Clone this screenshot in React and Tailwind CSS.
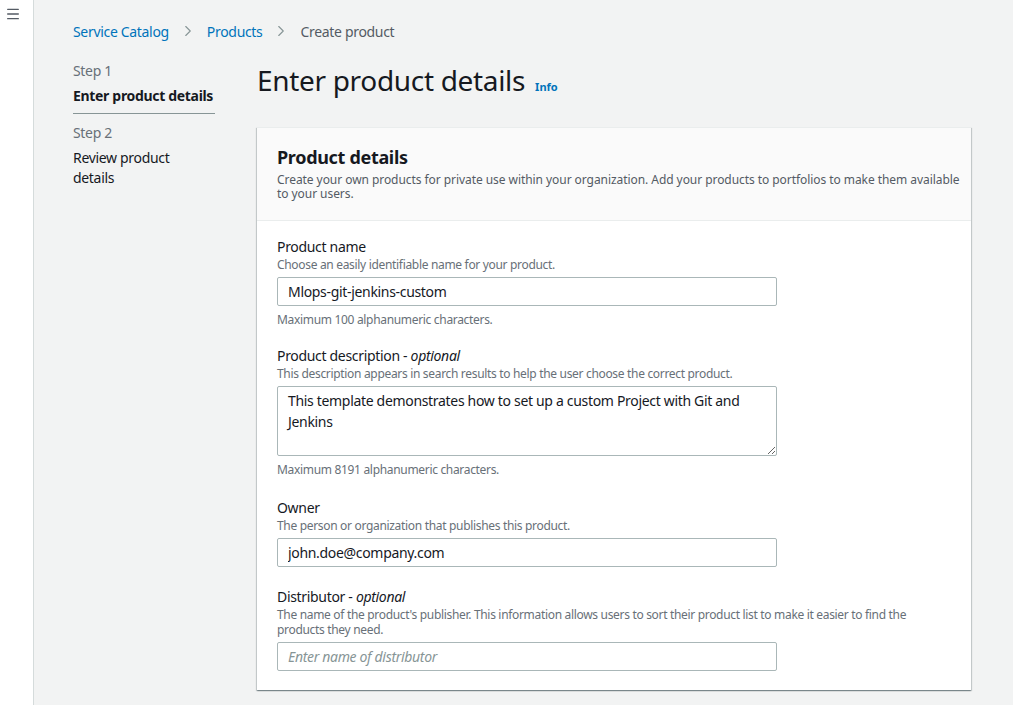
import { Menu, ChevronRight } from "lucide-react";

const font = { fontFamily: '"Noto Sans", "Open Sans", sans-serif' };

function Field({ label, optional, hint, children, footer, className }) {
  return (
    <div className={className}>
      <div className="text-[14px] leading-[20px] text-[#16191f]">
        {label}
        {optional && (
          <>
            {" - "}
            <i>optional</i>
          </>
        )}
      </div>
      <div className="text-[12px] leading-[15px] text-[#687078]">{hint}</div>
      <div className="mt-[5px]">{children}</div>
      {footer && (
        <div className="mt-[6px] text-[12px] leading-[16px] text-[#687078]">{footer}</div>
      )}
    </div>
  );
}

const inputCls =
  "block w-[500px] h-[29px] border border-[#aab7b8] rounded-[2px] bg-white px-[10px] text-[14px] text-[#16191f] outline-none placeholder:italic placeholder:text-[#879596]";

export default function App() {
  return (
    <div className="flex min-h-[705px] bg-[#f2f3f3] tracking-[-0.02em]" style={font}>
      {/* collapsed nav rail */}
      <div className="w-[34px] shrink-0 bg-white border-r border-[#d5dbdb] pt-[6px] pl-[5px]">
        <Menu size={16} strokeWidth={2} className="text-[#545b64]" />
      </div>

      <div className="flex-1 pl-[39px] pr-[42px]">
        {/* breadcrumb */}
        <nav className="flex items-center h-[20px] mt-[21px] text-[14px] text-[#545b64]">
          <a className="text-[#0073bb]">Service Catalog</a>
          <ChevronRight size={18} strokeWidth={1.5} className="mx-[10px] text-[#879596]" />
          <a className="text-[#0073bb]">Products</a>
          <ChevronRight size={18} strokeWidth={1.5} className="mx-[10px] text-[#879596]" />
          <span>Create product</span>
        </nav>

        <div className="flex mt-[20px]">
          {/* steps */}
          <div className="w-[142px] shrink-0 mr-[42px] text-[14px] leading-[20px]">
            <div className="text-[#687078]">Step 1</div>
            <div className="mt-[5px] font-bold text-[#16191f] pb-[7px] border-b border-[#879596] whitespace-nowrap">
              Enter product details
            </div>
            <div className="mt-[9px] text-[#687078]">Step 2</div>
            <div className="mt-[5px] max-w-[110px] text-[#16191f]">Review product details</div>
          </div>

          {/* content */}
          <div className="flex-1">
            <div className="flex items-baseline gap-[10px] h-[38px]">
              <h1 className="text-[28px] leading-[38px] text-[#16191f]">Enter product details</h1>
              <span className="text-[11px] font-bold text-[#0073bb] tracking-normal">Info</span>
            </div>

            <div className="mt-[28px] bg-white border-t border-[#eaeded] shadow-[0_1px_1px_0_rgba(0,28,36,0.3),1px_1px_1px_0_rgba(0,28,36,0.15),-1px_1px_1px_0_rgba(0,28,36,0.15)]">
              <div className="bg-[#fafafa] border-b border-[#eaeded] pl-[20px] pr-[4px] pt-[17px] pb-[19px]">
                <h2 className="text-[18px] leading-[24px] font-bold text-[#16191f]">Product details</h2>
                <p className="mt-[4px] text-[12px] leading-[14px] text-[#545b64] tracking-[-0.005em]">
                  Create your own products for private use within your organization. Add your products to portfolios to make them available to your users.
                </p>
              </div>

              <div className="px-[20px] pt-[16px] pb-[19px]">
                <Field
                  label="Product name"
                  hint="Choose an easily identifiable name for your product."
                  footer="Maximum 100 alphanumeric characters."
                >
                  <input className={inputCls} defaultValue="Mlops-git-jenkins-custom" />
                </Field>

                <Field
                  className="mt-[18px]"
                  label="Product description"
                  optional
                  hint="This description appears in search results to help the user choose the correct product."
                  footer="Maximum 8191 alphanumeric characters."
                >
                  <textarea
                    className="block w-[500px] h-[70px] border border-[#aab7b8] rounded-[2px] bg-white px-[10px] py-[3px] text-[14px] leading-[21px] text-[#16191f] outline-none resize-y"
                    defaultValue="This template demonstrates how to set up a custom Project with Git and Jenkins"
                  />
                </Field>

                <Field
                  className="mt-[20px]"
                  label="Owner"
                  hint="The person or organization that publishes this product."
                >
                  <input className={inputCls} defaultValue="john.doe@company.com" />
                </Field>

                <Field
                  className="mt-[20px]"
                  label="Distributor"
                  optional
                  hint="The name of the product's publisher. This information allows users to sort their product list to make it easier to find the products they need."
                >
                  <input className={inputCls} placeholder="Enter name of distributor" />
                </Field>
              </div>
            </div>
          </div>
        </div>
      </div>
    </div>
  );
}
